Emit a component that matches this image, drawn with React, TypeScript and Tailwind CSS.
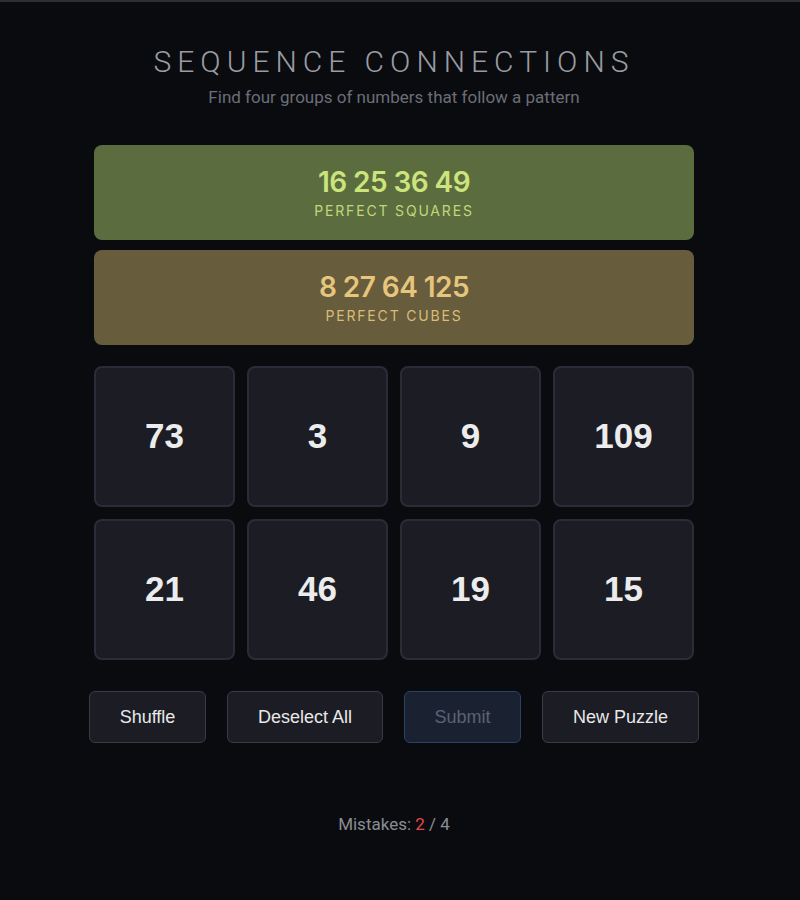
import React from "react";

const tiles = ["73", "3", "9", "109", "21", "46", "19", "15"];

export default function App() {
  return (
    <div className="min-h-[900px] w-full bg-[#0a0b0f] border-t-2 border-[#2e2f2e]">
      <div className="w-[788px] flex flex-col items-center">
        <h1
          className="mt-[42px] text-[30px] leading-[36px] font-light tracking-[0.2em] text-[#9a9ca3]"
          style={{ fontFamily: "Roboto, sans-serif" }}
        >
          SEQUENCE CONNECTIONS
        </h1>
        <p
          className="mt-[7px] text-[17px] leading-[20px] text-[#6b6e77]"
          style={{ fontFamily: "Roboto, sans-serif" }}
        >
          Find four groups of numbers that follow a pattern
        </p>

        <div className="mt-[38px] w-[600px] flex flex-col gap-[10px]" style={{ fontFamily: "Inter, sans-serif" }}>
          <div className="h-[95px] rounded-[8px] bg-[#5b6d3f] flex flex-col items-center justify-center">
            <div className="text-[28px] leading-[32px] font-semibold tracking-[-0.02em] text-[#cde37c]">16 25 36 49</div>
            <div className="mt-[5px] text-[14px] leading-[16px] tracking-[0.13em] text-[#c2d77a]">PERFECT SQUARES</div>
          </div>
          <div className="h-[95px] rounded-[8px] bg-[#675c3c] flex flex-col items-center justify-center">
            <div className="text-[28px] leading-[32px] font-semibold tracking-[-0.02em] text-[#e6c57c]">8 27 64 125</div>
            <div className="mt-[5px] text-[14px] leading-[16px] tracking-[0.13em] text-[#d9bc78]">PERFECT CUBES</div>
          </div>
        </div>

        <div className="mt-[21px] w-[600px] grid grid-cols-4 gap-[12px]">
          {tiles.map((t) => (
            <div
              key={t}
              className="h-[141px] rounded-[8px] bg-[#1b1c24] border-2 border-[#2b2c38] flex items-center justify-center text-[35px] font-bold text-[#ececec]"
              style={{ fontFamily: "'Liberation Sans', Arial, sans-serif" }}
            >
              {t}
            </div>
          ))}
        </div>

        <div
          className="mt-[31px] flex gap-[21px] text-[18px]"
          style={{ fontFamily: "'Liberation Sans', Arial, sans-serif" }}
        >
          <button className="w-[117px] h-[52px] rounded-[6px] bg-[#1b1c24] border border-[#3a3b46] text-[#e8e8e8]">Shuffle</button>
          <button className="w-[156px] h-[52px] rounded-[6px] bg-[#1b1c24] border border-[#3a3b46] text-[#e8e8e8]">Deselect All</button>
          <button className="w-[117px] h-[52px] rounded-[6px] bg-[#1a2232] border border-[#2a4168] text-[#5c6270]">Submit</button>
          <button className="w-[157px] h-[52px] rounded-[6px] bg-[#1b1c24] border border-[#3a3b46] text-[#e8e8e8]">New Puzzle</button>
        </div>

        <p
          className="mt-[71px] text-[17px] leading-[20px] text-[#8a8c94]"
          style={{ fontFamily: "Roboto, sans-serif" }}
        >
          Mistakes: <span className="text-[#e5484d]">2</span> / 4
        </p>
      </div>
    </div>
  );
}
